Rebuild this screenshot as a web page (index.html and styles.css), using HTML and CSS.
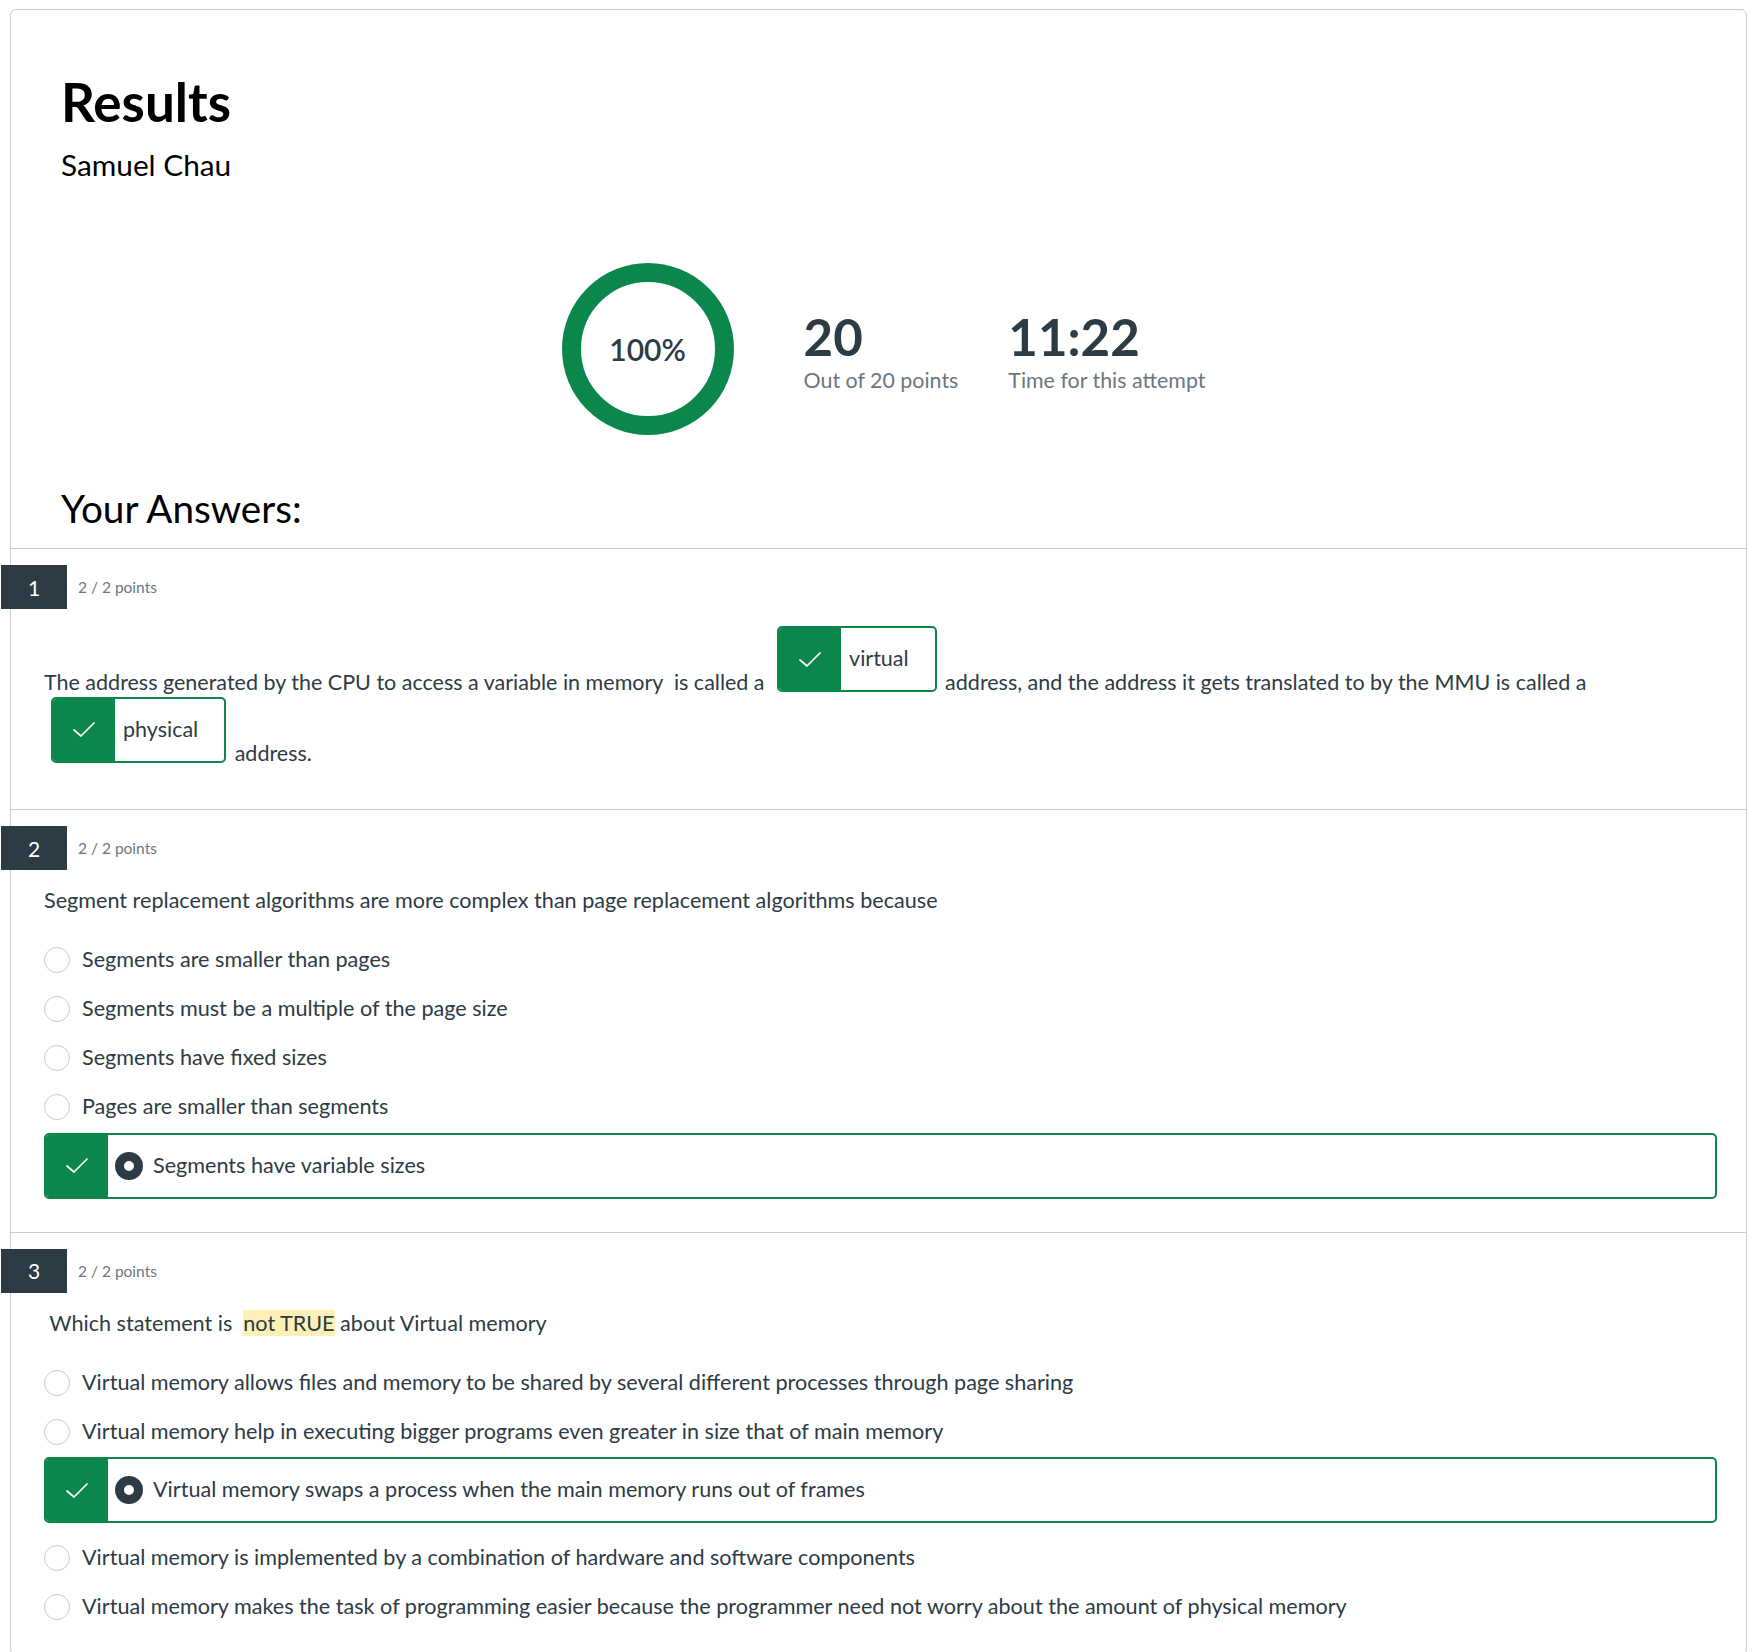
FILE: index.html
```html
<!DOCTYPE html>
<html lang="en">
<head>
<meta charset="utf-8">
<title>Results</title>
<link rel="stylesheet" href="styles.css">
</head>
<body>
<main class="card">
  <header class="summary">
    <h1 class="title">Results</h1>
    <div class="student">Samuel Chau</div>
    <section class="stats">
      <div class="ring"><span class="ring-text">100%</span></div>
      <div class="stat">
        <div class="stat-num">20</div>
        <div class="stat-label">Out of 20 points</div>
      </div>
      <div class="stat">
        <div class="stat-num">11:22</div>
        <div class="stat-label">Time for this attempt</div>
      </div>
    </section>
    <h2 class="answers-title">Your Answers:</h2>
  </header>

  <section class="question">
    <div class="q-header">
      <div class="q-num">1</div>
      <div class="q-points">2 / 2 points</div>
    </div>
    <p class="q-text q-blanks">The address generated by the CPU to access a variable in memory&nbsp; is called a <span class="blank"><span class="blank-inner"><span class="mark"><svg class="check" viewBox="0 0 22 15" width="22" height="15"><polyline points="1,8 8,14 21,1"/></svg></span><span class="blank-word">virtual</span></span></span> address, and the address it gets translated to by the MMU is called a <span class="blank"><span class="blank-inner"><span class="mark"><svg class="check" viewBox="0 0 22 15" width="22" height="15"><polyline points="1,8 8,14 21,1"/></svg></span><span class="blank-word">physical</span></span></span> address.</p>
  </section>

  <section class="question">
    <div class="q-header">
      <div class="q-num">2</div>
      <div class="q-points">2 / 2 points</div>
    </div>
    <p class="q-text">Segment replacement algorithms are more complex than page replacement algorithms because</p>
    <div class="options">
      <div class="option"><span class="radio"></span><span class="opt-text">Segments are smaller than pages</span></div>
      <div class="option"><span class="radio"></span><span class="opt-text">Segments must be a multiple of the page size</span></div>
      <div class="option"><span class="radio"></span><span class="opt-text">Segments have fixed sizes</span></div>
      <div class="option"><span class="radio"></span><span class="opt-text">Pages are smaller than segments</span></div>
      <div class="option option-correct"><span class="mark"><svg class="check" viewBox="0 0 22 15" width="22" height="15"><polyline points="1,8 8,14 21,1"/></svg></span><span class="radio radio-on"></span><span class="opt-text">Segments have variable sizes</span></div>
    </div>
  </section>

  <section class="question">
    <div class="q-header">
      <div class="q-num">3</div>
      <div class="q-points">2 / 2 points</div>
    </div>
    <p class="q-text">&nbsp;Which statement is&nbsp; <span class="hl">not TRUE</span> about Virtual memory</p>
    <div class="options">
      <div class="option"><span class="radio"></span><span class="opt-text">Virtual memory allows files and memory to be shared by several different processes through page sharing</span></div>
      <div class="option"><span class="radio"></span><span class="opt-text">Virtual memory help in executing bigger programs even greater in size that of main memory</span></div>
      <div class="option option-correct"><span class="mark"><svg class="check" viewBox="0 0 22 15" width="22" height="15"><polyline points="1,8 8,14 21,1"/></svg></span><span class="radio radio-on"></span><span class="opt-text">Virtual memory swaps a process when the main memory runs out of frames</span></div>
      <div class="option"><span class="radio"></span><span class="opt-text">Virtual memory is implemented by a combination of hardware and software components</span></div>
      <div class="option"><span class="radio"></span><span class="opt-text">Virtual memory makes the task of programming easier because the programmer need not worry about the amount of physical memory</span></div>
    </div>
  </section>
</main>
</body>
</html>
```

FILE: styles.css
```css
* { box-sizing: border-box; }

html { overflow: hidden; }

body {
  margin: 0;
  font-family: Lato, "Noto Sans", "Liberation Sans", sans-serif;
  color: #2d3b45;
  background: #ffffff;
}

.card {
  margin: 9px 14px 0 10px;
  border: 1px solid #c7cdd1;
  border-radius: 6px;
  background: #ffffff;
}

/* ---------- summary ---------- */
.summary {
  padding: 67px 50px 19px 50px;
}

.title {
  margin: 0;
  font-size: 53px;
  line-height: 49px;
  font-weight: 700;
  color: #000000;
}

.student {
  margin-top: 21px;
  font-size: 29.8px;
  line-height: 35px;
  color: #000000;
}

.stats {
  display: flex;
  justify-content: center;
  align-items: flex-start;
  margin-top: 81px;
  padding-left: 10px;
}

.ring {
  width: 172px;
  height: 172px;
  border: 19px solid #0b874b;
  border-radius: 50%;
  display: flex;
  align-items: center;
  justify-content: center;
  margin-right: 70px;
}

.ring-text {
  font-size: 30px;
  font-weight: 600;
  color: #2d3b45;
  line-height: 36px;
}

.stat {
  margin-top: 48px;
}

.stat + .stat {
  margin-left: 50px;
}

.stat-num {
  font-size: 51px;
  line-height: 51px;
  font-weight: 700;
  color: #2d3b45;
}

.stat-label {
  margin-top: 5px;
  font-size: 21.4px;
  line-height: 27px;
  color: #6b7780;
}

.answers-title {
  margin: 53px 0 0 0;
  font-size: 38.7px;
  line-height: 41px;
  font-weight: 400;
  color: #000000;
}

/* ---------- questions ---------- */
.question {
  border-top: 1px solid #c7cdd1;
  padding: 16px 29px 23px 33px;
}

.q-header {
  display: flex;
  align-items: center;
  margin-left: -43px;
  height: 44px;
}

.q-num {
  width: 66px;
  height: 44px;
  background: #2d3b45;
  color: #ffffff;
  font-size: 21px;
  display: flex;
  align-items: center;
  justify-content: center;
}

.q-points {
  margin-left: 11px;
  font-size: 15.5px;
  color: #6b7780;
}

.q-text {
  margin: 15px 0 0 0;
  font-size: 21.6px;
  line-height: 31.5px;
  color: #2d3b45;
}

.q-blanks {
  margin: 17px 0 19px 0;
  font-size: 21.5px;
  line-height: 28.6px;
}

.hl {
  background: #fcf0b6;
}

/* fill in the blank */
.blank {
  display: inline-block;
  overflow: hidden;
  vertical-align: -2px;
  height: 66px;
  margin: 0 3px 0 7px;
  border: 2px solid #0b874b;
  border-radius: 5px;
}

.blank-inner {
  display: flex;
  height: 100%;
  align-items: stretch;
}

.mark {
  width: 62px;
  flex: none;
  background: #0b874b;
  display: flex;
  align-items: center;
  justify-content: center;
}

.check {
  display: block;
}

.check polyline {
  fill: none;
  stroke: #ffffff;
  stroke-width: 1.7;
  stroke-linecap: round;
  stroke-linejoin: round;
}

.blank-word {
  display: flex;
  align-items: center;
  padding: 0 26px 0 8px;
  font-size: 21.5px;
  line-height: 31.5px;
  color: #2d3b45;
}

/* multiple choice */
.options {
  margin-top: 19px;
}

.option {
  display: flex;
  align-items: center;
  height: 49px;
}

.radio {
  flex: none;
  width: 26px;
  height: 26px;
  border: 1px solid #c7cdd1;
  border-radius: 50%;
  background: #ffffff;
}

.opt-text {
  margin-left: 12px;
  font-size: 21.6px;
  line-height: 31.5px;
  color: #2d3b45;
}

.option-correct {
  height: 66px;
  margin: 1px 0 10px 0;
  border: 2px solid #0b874b;
  border-radius: 5px;
  overflow: hidden;
}

.option-correct .mark {
  align-self: stretch;
}

.radio-on {
  width: 28px;
  height: 28px;
  margin-left: 7px;
  border: 9px solid #2d3b45;
}

.radio-on + .opt-text {
  margin-left: 10px;
}
```
